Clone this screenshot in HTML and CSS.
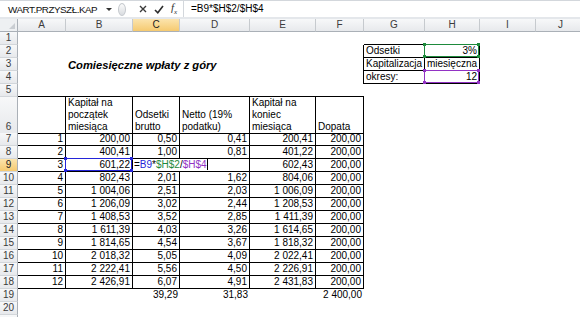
FILE: index.html
```html
<!DOCTYPE html>
<html>

<head>
  <title>WART.PRZYSZŁ.KAP</title>

  <link rel="stylesheet" href="styles.css">
</head>

<body>

  <div class="fbar">
    <div class="namebox">
      <span>WART.PRZYSZŁ.KAP</span>
      <span class="drop"></span>
    </div>
    <span class="knob"></span>
    <div class="fbtns">
      <svg width="8" height="8" viewBox="0 0 8 8"><path d="M1 1L7 7M7 1L1 7" stroke="#3a3a3a" stroke-width="1.4"/></svg>
      <svg width="10" height="9" viewBox="0 0 10 9"><path d="M1 5L3.8 7.8L9 1" fill="none" stroke="#2d2d2d" stroke-width="1.6"/></svg>
      <span class="fx"><i>f</i><sub>x</sub></span>
    </div>
    <div class="finput">=B9*$H$2/$H$4</div>
  </div>

  <div class="sheet">
    <div class="row head">
      <div class="corner"></div>
      <div class="ch">A</div><div class="ch">B</div><div class="ch on">C</div><div class="ch">D</div><div class="ch">E</div>
      <div class="ch">F</div><div class="ch">G</div><div class="ch">H</div><div class="ch">I</div><div class="ch">J</div>
    </div>

    <div class="row">
      <div class="rh">1</div>
      <div></div><div></div><div></div><div></div><div></div><div></div>
      <div class="bb"></div><div class="bb"></div>
    </div>
    <div class="row">
      <div class="rh">2</div>
      <div></div><div></div><div></div><div></div><div></div><div class="br"></div>
      <div class="b">Odsetki</div><div class="b r ref green">3%</div>
    </div>
    <div class="row">
      <div class="rh">3</div>
      <div></div><div class="title">Comiesięczne wpłaty z góry</div><div></div><div></div><div></div><div class="br"></div>
      <div class="b">Kapitalizacja</div><div class="b">miesięczna</div>
    </div>
    <div class="row">
      <div class="rh">4</div>
      <div></div><div></div><div></div><div></div><div></div><div class="br"></div>
      <div class="b">okresy:</div><div class="b r ref purple">12</div>
    </div>
    <div class="row">
      <div class="rh">5</div>
      <div class="bb"></div><div class="bb"></div><div class="bb"></div><div class="bb"></div><div class="bb"></div><div class="bb"></div>
    </div>
    <div class="row tall">
      <div class="rh">6</div>
      <div class="b"></div>
      <div class="b hd">Kapitał na początek miesiąca</div>
      <div class="b hd">Odsetki brutto</div>
      <div class="b hd">Netto (19% podatku)</div>
      <div class="b hd">Kapitał na koniec miesiąca</div>
      <div class="b hd">Dopata</div>
    </div>

    <div class="row">
      <div class="rh">7</div>
      <div class="b r">1</div><div class="b r">200,00</div><div class="b r">0,50</div><div class="b r">0,41</div><div class="b r">200,41</div><div class="b r">200,00</div>
    </div>
    <div class="row">
      <div class="rh">8</div>
      <div class="b r">2</div><div class="b r">400,41</div><div class="b r">1,00</div><div class="b r">0,81</div><div class="b r">401,22</div><div class="b r">200,00</div>
    </div>
    <div class="row">
      <div class="rh on">9</div>
      <div class="b r">3</div><div class="b r ref blue">601,22</div>
      <div class="b edit"><span class="caret">=<span class="c-blue">B9</span>*<span class="c-green">$H$2</span>/<span class="c-purple">$H$4</span></span></div>
      <div class="b r">602,43</div><div class="b r">200,00</div>
    </div>
    <div class="row">
      <div class="rh">10</div>
      <div class="b r">4</div><div class="b r">802,43</div><div class="b r">2,01</div><div class="b r">1,62</div><div class="b r">804,06</div><div class="b r">200,00</div>
    </div>
    <div class="row">
      <div class="rh">11</div>
      <div class="b r">5</div><div class="b r">1&nbsp;004,06</div><div class="b r">2,51</div><div class="b r">2,03</div><div class="b r">1&nbsp;006,09</div><div class="b r">200,00</div>
    </div>
    <div class="row">
      <div class="rh">12</div>
      <div class="b r">6</div><div class="b r">1&nbsp;206,09</div><div class="b r">3,02</div><div class="b r">2,44</div><div class="b r">1&nbsp;208,53</div><div class="b r">200,00</div>
    </div>
    <div class="row">
      <div class="rh">13</div>
      <div class="b r">7</div><div class="b r">1&nbsp;408,53</div><div class="b r">3,52</div><div class="b r">2,85</div><div class="b r">1&nbsp;411,39</div><div class="b r">200,00</div>
    </div>
    <div class="row">
      <div class="rh">14</div>
      <div class="b r">8</div><div class="b r">1&nbsp;611,39</div><div class="b r">4,03</div><div class="b r">3,26</div><div class="b r">1&nbsp;614,65</div><div class="b r">200,00</div>
    </div>
    <div class="row">
      <div class="rh">15</div>
      <div class="b r">9</div><div class="b r">1&nbsp;814,65</div><div class="b r">4,54</div><div class="b r">3,67</div><div class="b r">1&nbsp;818,32</div><div class="b r">200,00</div>
    </div>
    <div class="row">
      <div class="rh">16</div>
      <div class="b r">10</div><div class="b r">2&nbsp;018,32</div><div class="b r">5,05</div><div class="b r">4,09</div><div class="b r">2&nbsp;022,41</div><div class="b r">200,00</div>
    </div>
    <div class="row">
      <div class="rh">17</div>
      <div class="b r">11</div><div class="b r">2&nbsp;222,41</div><div class="b r">5,56</div><div class="b r">4,50</div><div class="b r">2&nbsp;226,91</div><div class="b r">200,00</div>
    </div>
    <div class="row">
      <div class="rh">18</div>
      <div class="b r">12</div><div class="b r">2&nbsp;426,91</div><div class="b r">6,07</div><div class="b r">4,91</div><div class="b r">2&nbsp;431,83</div><div class="b r">200,00</div>
    </div>
    <div class="row">
      <div class="rh">19</div>
      <div></div><div></div><div class="r">39,29</div><div class="r">31,83</div><div></div><div class="r">2&nbsp;400,00</div>
    </div>
    <div class="row">
      <div class="rh">20</div>
    </div>
    <div class="row">
      <div class="rh"></div>
    </div>
  </div>

</body>

</html>
```

FILE: styles.css
```css
body {
  margin: 0;
  padding: 0;
  width: 580px;
  height: 317px;
  overflow: hidden;
  background-color: white;
  font-family: "Liberation Sans", Arial, sans-serif;
  font-size: 10px;
  color: black;
}

/* formula bar */

.fbar {
  display: flex;
  align-items: center;
  height: 19px;
  box-sizing: border-box;
  border-top: 1px solid #d3d7dc;
  border-bottom: 2px solid #e4e7eb;
}

.namebox {
  display: flex;
  align-items: center;
  width: 118px;
  height: 100%;
  padding-left: 8px;
  box-sizing: border-box;
  font-size: 9.8px;
  letter-spacing: -0.45px;
  color: #111;
}

.drop {
  margin-left: auto;
  margin-right: 6px;
  border-left: 3px solid transparent;
  border-right: 3px solid transparent;
  border-top: 3px solid #333;
}

.knob {
  width: 8px;
  height: 13px;
  border-radius: 50%;
  border: 1px solid #c4c8cd;
  background: linear-gradient(#fbfbfb, #d9dce0);
  box-sizing: border-box;
}

.fbtns {
  display: flex;
  align-items: center;
  gap: 7px;
  width: 57px;
  height: 100%;
  padding-left: 13px;
  box-sizing: border-box;
}

.fx {
  font-family: "Liberation Serif", serif;
  font-size: 11px;
  color: #333;
}

.fx sub {
  font-size: 7px;
  font-style: italic;
}

.finput {
  flex: 1;
  height: 100%;
  line-height: 16px;
  padding-left: 7px;
  border-left: 1px solid #d3d7dc;
}

/* sheet */

.row {
  display: grid;
  grid-template-columns: 18px 48px 67px 47px 70px 66px 48px 61px 55px 56px 50px;
  height: 13px;
}

.row.tall {
  height: 36px;
}

.row > div {
  box-sizing: border-box;
  padding: 0 2px;
  line-height: 12px;
  white-space: nowrap;
}

.row > .ch,
.row > .rh {
  padding: 0;
  text-align: center;
  color: #3b3b3b;
  background: linear-gradient(#f7f8f9, #e7e9ec);
}

.ch {
  border-right: 1px solid #c6cace;
  border-bottom: 1px solid #aab0b7;
}

.rh {
  display: flex;
  align-items: flex-end;
  justify-content: center;
  border-right: 1px solid #aab0b7;
  border-bottom: 1px solid #d2d6da;
}

.row > .on {
  background: linear-gradient(#fbe4ad, #f5ca70);
  color: #222;
}

.corner {
  position: relative;
  background: #eef0f2;
  border-right: 1px solid #aab0b7;
  border-bottom: 1px solid #aab0b7;
}

.corner::after {
  content: "";
  position: absolute;
  right: 2px;
  bottom: 2px;
  border-left: 6px solid transparent;
  border-bottom: 6px solid #c9cdd2;
}

.b {
  border-right: 1px solid black;
  border-bottom: 1px solid black;
}

.bb {
  border-bottom: 1px solid black;
}

.br {
  border-right: 1px solid black;
}

.r {
  text-align: right;
}

.row > .title {
  font-size: 11.2px;
  font-weight: bold;
  font-style: italic;
  overflow: visible;
  padding-top: 1px;
}

.row > .hd {
  display: flex;
  align-items: flex-end;
  white-space: normal;
}

.row > .edit {
  grid-column: span 2;
  padding-left: 1px;
}

.caret {
  border-right: 1px solid black;
}

.c-blue {
  color: #2424d8;
}

.c-green {
  color: #1e8a3c;
}

.c-purple {
  color: #9233c4;
}

/* range highlights shown while the formula is edited */

.ref {
  position: relative;
  --rc: #2424d8;
}

.ref.green {
  --rc: #1e8a3c;
}

.ref.purple {
  --rc: #9233c4;
}

.ref::after {
  content: "";
  position: absolute;
  top: -1px;
  left: -1px;
  right: 0;
  bottom: 0;
  border: 1px solid var(--rc);
}

.ref::before {
  content: "";
  position: absolute;
  z-index: 1;
  top: -2px;
  left: -2px;
  right: -1px;
  bottom: -1px;
  background:
    linear-gradient(var(--rc), var(--rc)) left top / 3px 3px no-repeat,
    linear-gradient(var(--rc), var(--rc)) right top / 3px 3px no-repeat,
    linear-gradient(var(--rc), var(--rc)) left bottom / 3px 3px no-repeat,
    linear-gradient(var(--rc), var(--rc)) right bottom / 3px 3px no-repeat;
}
```
